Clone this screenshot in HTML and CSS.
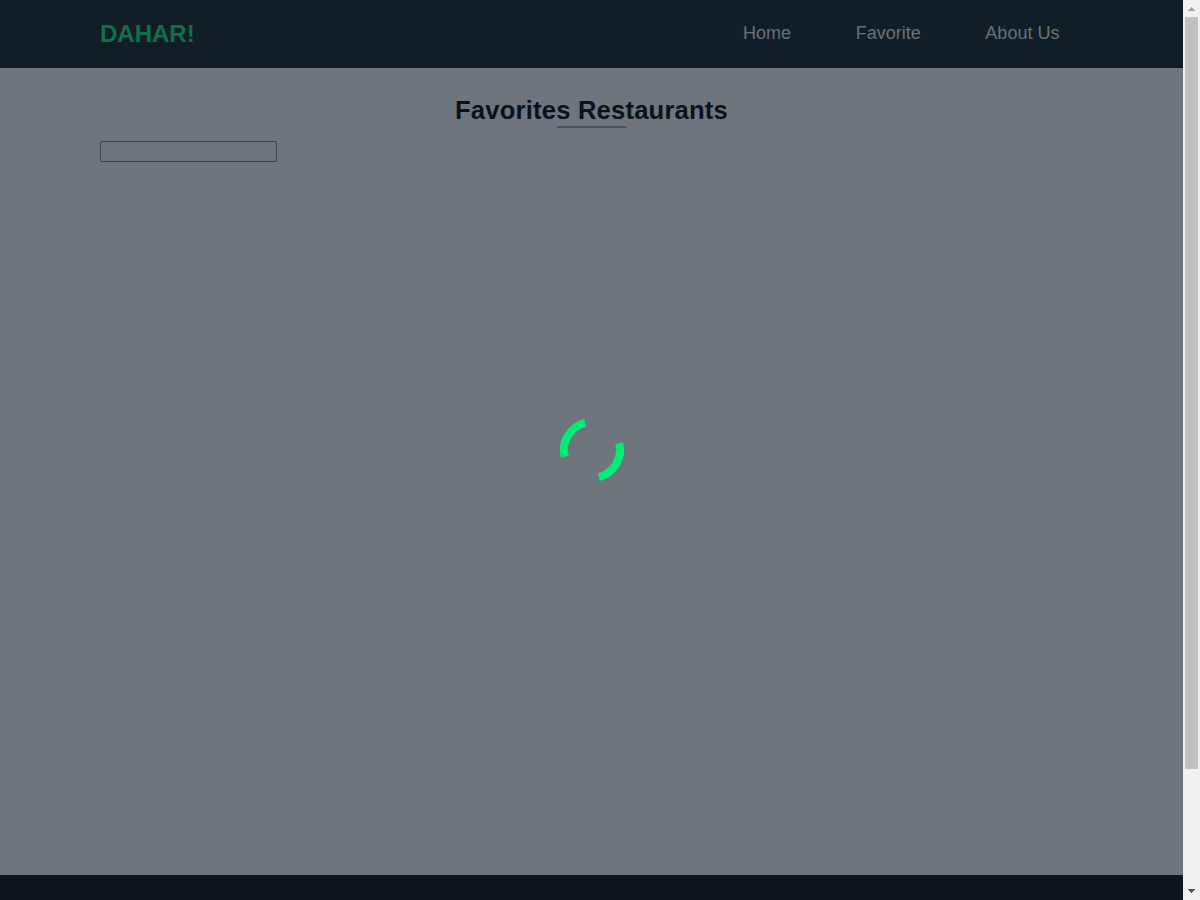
FILE: index.html
```html
<!DOCTYPE html>
<html lang="en">
<head>
<meta charset="utf-8">
<title>Dahar!</title>
<link rel="stylesheet" href="styles.css">
</head>
<body>
<div class="page">
  <header class="header">
    <h1 class="logo">DAHAR!</h1>
    <nav class="nav"><a>Home</a><a>Favorite</a><a>About Us</a></nav>
  </header>
  <main class="main">
    <h2 class="title">Favorites Restaurants</h2>
    <input class="search" type="text" aria-label="Search">
  </main>
  <footer class="footer"></footer>
  <svg class="loader" viewBox="0 0 64 64">
    <g fill="none" stroke="#00ee76" stroke-width="8" transform="rotate(-14 32 32)">
      <path d="M4 32A28 28 0 0 1 32 4"/>
      <path d="M60 32A28 28 0 0 1 32 60"/>
    </g>
  </svg>
</div>
<div class="scrollbar">
  <svg class="arrow" viewBox="0 0 17 17" shape-rendering="crispEdges"><path fill="#a3a3a3" d="M8 7h1v1h1v1h1v1h1v1H5v-1h1V9h1V8h1z"/></svg>
  <div class="thumb"></div>
  <svg class="arrow" viewBox="0 0 17 17" shape-rendering="crispEdges"><path fill="#505050" d="M5 6h7v1h-1v1h-1v1H9v1H8V9H7V8H6V7H5z"/></svg>
</div>
</body>
</html>
```
FILE: styles.css
```css
* { box-sizing: border-box; }
body { margin: 0; height: 900px; display: flex; overflow: hidden; font-family: "Liberation Sans", Arial, sans-serif; }
.page { position: relative; width: 1183px; height: 900px; display: flex; flex-direction: column; background: #6e757c; }
.header { height: 68px; padding: 0 123.6px 2px 100px; display: flex; align-items: center; justify-content: space-between; background: #111e27; }
.logo { margin: 0; padding-top: 2px; font-size: 24px; line-height: 28px; color: #0f7049; }
.nav { display: flex; gap: 64.7px; font-size: 18px; line-height: 20px; color: #6b7074; }
.main { flex: 1; display: flex; flex-direction: column; align-items: center; padding: 26px 100px 0; }
.title { margin: 0 0 13px; height: 34px; font-size: 25.6px; line-height: 32px; letter-spacing: 0.2px; color: #09131b; display: flex; flex-direction: column; align-items: center; }
.title::after { content: ""; width: 69px; height: 2px; border-top: 1px solid #50555a; background: #117049; }
.search { align-self: flex-start; width: 177px; height: 21px; margin: 0; padding: 1px 2px; border: 1px solid #394047; border-radius: 2px; background: transparent; outline: none; }
.footer { height: 25px; background: #0e161d; }
.loader { position: absolute; left: 560px; top: 418px; width: 64px; height: 64px; }
.scrollbar { width: 17px; height: 900px; display: flex; flex-direction: column; align-items: center; background: #f1f1f1; }
.arrow { width: 17px; height: 17px; flex: none; }
.thumb { width: 13px; height: 752px; margin-bottom: auto; background: #c1c1c1; }
```
